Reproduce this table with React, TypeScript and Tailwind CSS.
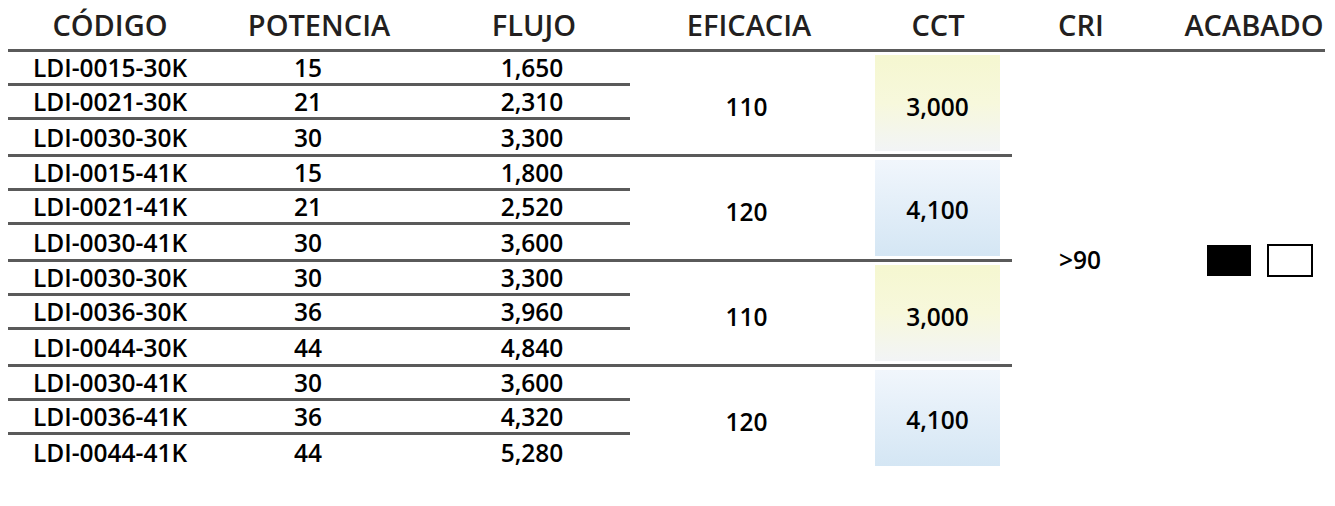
const GROUPS = [
  {
    eficacia: "110",
    cct: "3,000",
    warm: true,
    rows: [
      { code: "LDI-0015-30K", watts: "15", flux: "1,650" },
      { code: "LDI-0021-30K", watts: "21", flux: "2,310" },
      { code: "LDI-0030-30K", watts: "30", flux: "3,300" },
    ],
  },
  {
    eficacia: "120",
    cct: "4,100",
    warm: false,
    rows: [
      { code: "LDI-0015-41K", watts: "15", flux: "1,800" },
      { code: "LDI-0021-41K", watts: "21", flux: "2,520" },
      { code: "LDI-0030-41K", watts: "30", flux: "3,600" },
    ],
  },
  {
    eficacia: "110",
    cct: "3,000",
    warm: true,
    rows: [
      { code: "LDI-0030-30K", watts: "30", flux: "3,300" },
      { code: "LDI-0036-30K", watts: "36", flux: "3,960" },
      { code: "LDI-0044-30K", watts: "44", flux: "4,840" },
    ],
  },
  {
    eficacia: "120",
    cct: "4,100",
    warm: false,
    rows: [
      { code: "LDI-0030-41K", watts: "30", flux: "3,600" },
      { code: "LDI-0036-41K", watts: "36", flux: "4,320" },
      { code: "LDI-0044-41K", watts: "44", flux: "5,280" },
    ],
  },
];

export default function App() {
  return (
    <div className="h-[506px] w-[1335px] overflow-hidden bg-white font-['Open_Sans',sans-serif] font-semibold text-black">
      {/* Header */}
      <div className="flex h-[49px] items-center text-[29px] leading-none text-[#231f20]">
        <div className="ml-[8px] w-[204px] text-center">CÓDIGO</div>
        <div className="w-[214px] text-center">POTENCIA</div>
        <div className="w-[216px] text-center">FLUJO</div>
        <div className="w-[214px] text-center">EFICACIA</div>
        <div className="w-[164px] text-center">CCT</div>
        <div className="w-[122px] text-center">CRI</div>
        <div className="flex-1 pl-[31px] text-center">ACABADO</div>
      </div>
      <div className="ml-[8px] h-[3px] w-[1317px] bg-[#5a5a5a]" />

      {/* Body */}
      <div className="flex text-[24.5px] leading-none">
        <div className="ml-[8px] flex w-[1004px] flex-col">
          {GROUPS.map((g, gi) => (
            <div
              key={gi}
              className={
                gi < GROUPS.length - 1
                  ? "flex border-b-[3px] border-[#5a5a5a]"
                  : "flex"
              }
            >
              <div className="flex w-[622px] flex-col">
                {g.rows.map((r, ri) => (
                  <div
                    key={ri}
                    className={
                      ri < g.rows.length - 1
                        ? "flex h-[34px] items-center border-b-[3px] border-[#5a5a5a] pt-[1px]"
                        : "flex h-[34px] items-center pt-[2px]"
                    }
                  >
                    <div className="w-[204px] text-center">{r.code}</div>
                    <div className="w-[192px] text-center">{r.watts}</div>
                    <div className="w-[226px] pl-[30px] text-center">{r.flux}</div>
                  </div>
                ))}
              </div>
              <div className="flex w-[245px] items-center justify-center pr-[12px] pt-[9px]">
                {g.eficacia}
              </div>
              <div className="flex w-[125px] py-[3px]">
                <div
                  className={
                    g.warm
                      ? "flex w-full items-center justify-center bg-gradient-to-b from-[#f5f7d0] via-[#f7f8dc] to-[#f2f4f6] pt-[9px]"
                      : "flex w-full items-center justify-center bg-gradient-to-b from-[#f1f6fc] to-[#d4e6f4] pt-[5px]"
                  }
                >
                  {g.cct}
                </div>
              </div>
            </div>
          ))}
        </div>

        {/* CRI + acabado, shared by every row */}
        <div className="flex flex-1 items-center">
          <div className="w-[136px] text-center">&gt;90</div>
          <div className="ml-[59px] flex items-center gap-[16px]">
            <div className="h-[31px] w-[44px] bg-black" />
            <div className="h-[33px] w-[46px] border-2 border-black bg-white" />
          </div>
        </div>
      </div>
    </div>
  );
}
